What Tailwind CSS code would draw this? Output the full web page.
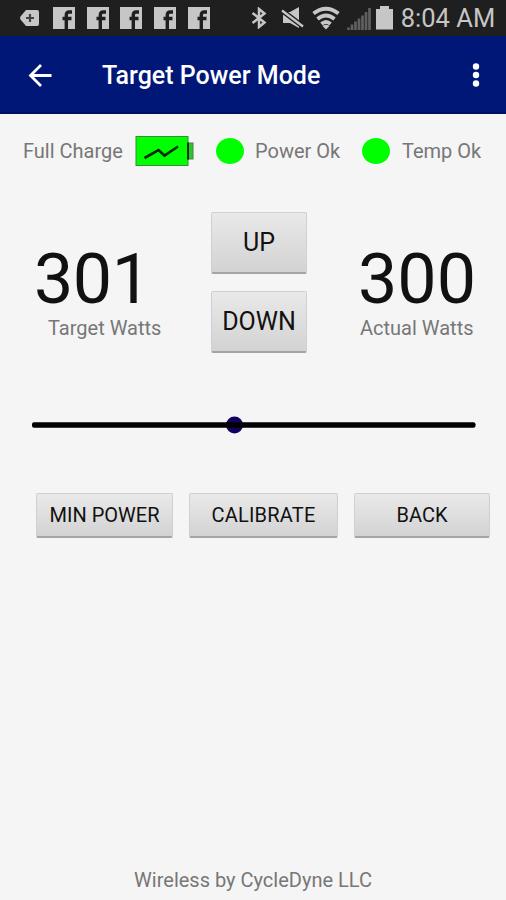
<!DOCTYPE html>
<html lang="en">
<head>
  <meta charset="UTF-8" />
  <meta name="viewport" content="width=device-width, initial-scale=1" />
  <title>Target Power Mode</title>
  <script src="https://cdn.jsdelivr.net/npm/@tailwindcss/browser@4"></script>
</head>
<body class="bg-[#f5f5f5] font-['Roboto',sans-serif] text-[#777] w-[506px] h-[900px] flex flex-col overflow-hidden whitespace-nowrap">

  <!-- Shared icon -->
  <svg class="hidden">
    <symbol id="fb" viewBox="0 0 22 22">
      <path fill="#c6c6c6" d="M0 0h22v22H0z" />
      <path fill="none" stroke="#1f1f1f" stroke-width="3.400" d="M13.300 22V8q0-3 3-3H19M9.500 11.500h9" />
    </symbol>
  </svg>

  <!-- Status bar -->
  <div class="h-9 shrink-0 bg-[#1f1f1f] flex items-center text-[#c6c6c6]">
    <svg class="ml-5 w-[19px] h-4" viewBox="0 0 19 16"><path fill="#c6c6c6" d="M6 0h11q2 0 2 2v12q0 2-2 2H6L.5 9.500Q-.3 8 .5 6.500z" /><path stroke="#444" stroke-width="2.200" d="M6 8h8M10 4v8" /></svg>
    <div class="ml-[14px] flex gap-[11.700px]">
      <svg class="w-[22px] h-[22px]"><use href="#fb" /></svg>
      <svg class="w-[22px] h-[22px]"><use href="#fb" /></svg>
      <svg class="w-[22px] h-[22px]"><use href="#fb" /></svg>
      <svg class="w-[22px] h-[22px]"><use href="#fb" /></svg>
      <svg class="w-[22px] h-[22px]"><use href="#fb" /></svg>
    </div>
    <svg class="ml-[41px] w-4 h-[22px]" viewBox="0 0 16 22" fill="none" stroke="#c6c6c6" stroke-width="2.500"><path d="M1.500 6 13.500 15.500 8 20V2l5.500 4.500L1.500 16" /></svg>
    <svg class="ml-[14px] w-[23px] h-[22px]" viewBox="0 0 23 22"><path fill="#c6c6c6" d="M2 5h7l9-5V21L9 16H2z" /><path stroke="#1f1f1f" stroke-width="5" d="M1 3.500l21 16" /><path stroke="#c6c6c6" stroke-width="2.300" d="M1 3.500l21 16" /></svg>
    <svg class="ml-[8px] w-[28px] h-[24px]" viewBox="0 0 28 24" fill="none" stroke="#c6c6c6" stroke-width="3.800"><path d="M1.500 7.500q12.500-9.500 25 0M5.500 13q8.500-7 17 0M9.500 18q4.500-4 9 0" /><path fill="#c6c6c6" stroke="none" d="M10.500 20q3.500-2.500 7 0L14 23.500z" /></svg>
    <svg class="ml-[6px] w-[26px] h-[24px]" viewBox="0 0 26 24" stroke="#606060" stroke-width="2.700"><path d="M2.500 24v-2.500M6 24v-5.500M9.500 24v-8.500M13 24V12.500M16.500 24V9.500M20 24V6M23.500 24V2" /></svg>
    <svg class="ml-[4px] w-[17px] h-[24px]" viewBox="0 0 17 24"><path fill="#c6c6c6" d="M0 3h4V0h9v3h4v20.500H0z" /></svg>
    <span class="ml-[8px] text-[25.500px] leading-9">8:04 AM</span>
  </div>

  <!-- App bar -->
  <header class="h-[78px] shrink-0 bg-[#001777] border-b-2 border-[#000f60] flex items-center text-white">
    <svg class="ml-7 mt-px w-6 h-6" viewBox="0 0 24 24" fill="none" stroke="#fff" stroke-width="2.800"><path d="M23.500 12.500H3M13 2 2.500 12.500 13 23" /></svg>
    <h1 class="ml-[50px] pt-[4px] text-[25px] font-medium">Target Power Mode</h1>
    <svg class="ml-auto mr-[26px] mt-[2px] w-2 h-6" viewBox="0 0 8 24" fill="#fff"><circle cx="4" cy="3.500" r="3.200" /><circle cx="4" cy="12" r="3.200" /><circle cx="4" cy="20.500" r="3.200" /></svg>
  </header>

  <!-- Sensor status -->
  <section class="mt-[21px] h-8 flex items-center text-[20px]">
    <span class="ml-[23px] w-[112px]">Full Charge</span>
    <svg class="w-[60px] h-8" viewBox="0 0 60 32">
      <rect x="1" y="1.500" width="52" height="29" fill="#0f0" stroke="#3a8a3a" />
      <rect x="53" y="8" width="5" height="16" fill="#2fc42f" stroke="#3a8a3a" />
      <path stroke="#063006" stroke-width="2" d="M53 7.500v17" />
      <path fill="none" stroke="#052805" stroke-width="2.600" d="M9.500 23 23.500 15 29.500 20.500 43 11.500" />
    </svg>
    <span class="ml-[21px] w-7 h-[26px] rounded-[50%] bg-[#00ff00]"></span>
    <span class="ml-[11px] w-[107px]">Power Ok</span>
    <span class="w-7 h-[26px] rounded-[50%] bg-[#00ff00]"></span>
    <span class="ml-[12px]">Temp Ok</span>
  </section>

  <!-- Watts -->
  <section class="mt-[45px] h-[142px] flex">
    <div class="w-[211px] pt-[33px]">
      <div class="pl-[34px] text-[70px] leading-[68px] tracking-[-0.500px] text-[#111]">301</div>
      <div class="pl-[48px] text-[20px] leading-[30px]">Target Watts</div>
    </div>
    <div class="w-24 flex flex-col gap-[17px] text-[25px] text-[#111]">
      <button class="h-[62px] rounded-[2px] bg-linear-to-b from-[#e9e9e9] to-[#d3d3d3] border border-[#d0d0d0] border-b-2 border-b-[#a4a4a4]">UP</button>
      <button class="h-[62px] rounded-[2px] bg-linear-to-b from-[#e9e9e9] to-[#d3d3d3] border border-[#d0d0d0] border-b-2 border-b-[#a4a4a4]">DOWN</button>
    </div>
    <div class="pt-[33px] pl-[51px]">
      <div class="text-[70px] leading-[68px] text-[#111]">300</div>
      <div class="pl-[2px] text-[20px] leading-[30px]">Actual Watts</div>
    </div>
  </section>

  <!-- Slider -->
  <svg class="mt-[62px] ml-8 w-[444px] h-5 shrink-0" viewBox="0 0 444 20">
    <circle cx="202.500" cy="9" r="8.500" fill="#14005e" />
    <rect x="0" y="6.200" width="443.500" height="5.600" rx="2" fill="#000" />
  </svg>

  <!-- Actions -->
  <section class="mt-[57px] ml-9 h-[45px] flex gap-4 text-[20px] text-[#111]">
    <button class="w-[137px] rounded-[2px] bg-linear-to-b from-[#e9e9e9] to-[#d3d3d3] border border-[#d0d0d0] border-b-2 border-b-[#a4a4a4]">MIN POWER</button>
    <button class="w-[149px] rounded-[2px] bg-linear-to-b from-[#e9e9e9] to-[#d3d3d3] border border-[#d0d0d0] border-b-2 border-b-[#a4a4a4] tracking-[0.200px]">CALIBRATE</button>
    <button class="w-[136px] rounded-[2px] bg-linear-to-b from-[#e9e9e9] to-[#d3d3d3] border border-[#d0d0d0] border-b-2 border-b-[#a4a4a4]">BACK</button>
  </section>

  <footer class="mt-auto mb-[5px] text-center text-[20px] leading-[30px]">Wireless by CycleDyne LLC</footer>
</body>
</html>
